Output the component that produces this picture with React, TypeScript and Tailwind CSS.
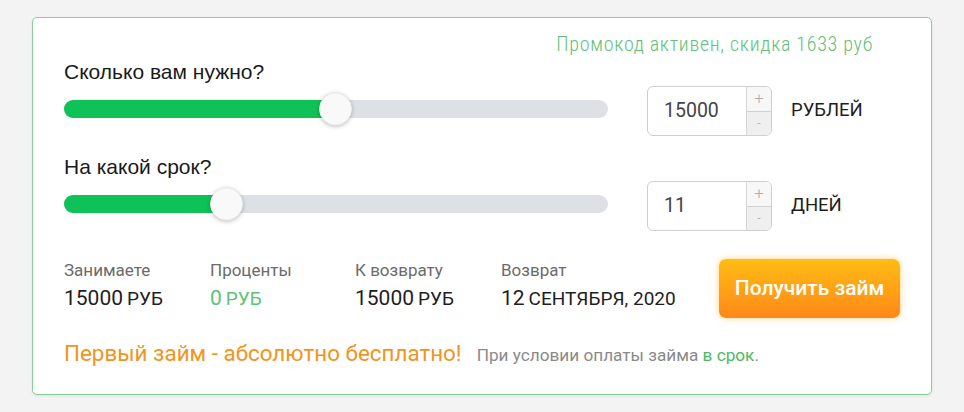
import React from "react";

const Slider = ({ fill }: { fill: number }) => (
  <div className="relative mb-[4px] h-[18px] w-[544px] rounded-full bg-[#dde1e6]">
    <div
      className="h-full rounded-full bg-[#0fc257]"
      style={{ width: fill }}
    />
    <div
      className="absolute top-1/2 h-[33px] w-[33px] -translate-y-1/2 rounded-full border border-[#ececec] bg-[#f9f9f9] shadow-[0_1px_4px_rgba(0,0,0,0.25)]"
      style={{ left: fill - 16 }}
    />
  </div>
);

const Spinner = ({ value }: { value: string }) => (
  <div className="flex h-[50px] w-[125px] overflow-hidden rounded-[6px] border border-[#cfcfcf] bg-white">
    <div className="flex flex-1 items-center pl-[16px] text-[19.5px] text-[#444]">
      {value}
    </div>
    <div className="flex w-[25px] flex-col border-l border-[#d6d6d6]">
      <div className="flex flex-1 items-center justify-center border-b border-[#d0d0d0] bg-[#f7f7f7] text-[17px] font-light leading-none text-[#b0b0b0]">
        +
      </div>
      <div className="flex flex-1 items-center justify-center bg-[#efefef] text-[12px] leading-none text-[#b8b8b8]">
        -
      </div>
    </div>
  </div>
);

const Stat = ({
  label,
  num,
  unit,
  green,
  w,
}: {
  label: string;
  num: string;
  unit: string;
  green?: boolean;
  w: string;
}) => (
  <div className={w}>
    <div className="text-[17px] leading-[20px] text-[#6b6b6b]">{label}</div>
    <div
      className={`mt-[7px] leading-[22px] ${green ? "text-[#5cc275]" : "text-[#1e1e1e]"}`}
    >
      <span className="text-[21px]">{num}</span>{" "}
      <span className="text-[19px]">{unit}</span>
    </div>
  </div>
);

export default function App() {
  return (
    <div
      className="min-h-[412px] w-full bg-[#f3f3f3] pt-[17px] pl-[32px]"
      style={{ fontFamily: "Roboto, 'Liberation Sans', sans-serif" }}
    >
      <div className="h-[378px] w-[900px] rounded-[5px] border border-[#86cf98] bg-white px-[31px] shadow-[0_1px_3px_rgba(0,0,0,0.08)]">
        <div className="flex justify-end pt-[15px] pr-[27px]">
          <span
            className="text-[20px] font-light leading-[22px] tracking-[0.7px] text-[#62c07a]"
            style={{ fontStretch: "condensed", fontFamily: "'Roboto Condensed', 'Liberation Sans Narrow', Roboto, sans-serif" }}
          >
            Промокод активен, скидка 1633 руб
          </span>
        </div>

        <div
          className="mt-[5px] text-[21px] leading-[24px] text-[#1a1a1a]"
          style={{ fontFamily: "'Liberation Sans', Arial, sans-serif" }}
        >
          Сколько вам нужно?
        </div>
        <div className="mt-[2px] flex h-[50px] items-center">
          <Slider fill={271} />
          <div className="ml-[39px]">
            <Spinner value="15000" />
          </div>
          <div className="ml-[19px] text-[18.5px] text-[#1e1e1e]">РУБЛЕЙ</div>
        </div>

        <div
          className="mt-[19px] text-[21px] leading-[24px] text-[#1a1a1a]"
          style={{ fontFamily: "'Liberation Sans', Arial, sans-serif" }}
        >
          На какой срок?
        </div>
        <div className="mt-[2px] flex h-[50px] items-center">
          <Slider fill={162} />
          <div className="ml-[39px]">
            <Spinner value="11" />
          </div>
          <div className="ml-[19px] text-[18.5px] text-[#1e1e1e]">ДНЕЙ</div>
        </div>

        <div className="mt-[28px] flex h-[59px] items-start">
          <div className="flex pt-[1px]">
            <Stat w="w-[146px]" label="Занимаете" num="15000" unit="РУБ" />
            <Stat w="w-[145px]" label="Проценты" num="0" unit="РУБ" green />
            <Stat w="w-[146px]" label="К возврату" num="15000" unit="РУБ" />
            <Stat w="w-[200px]" label="Возврат" num="12" unit="СЕНТЯБРЯ, 2020" />
          </div>
          <button className="ml-auto h-[59px] w-[181px] rounded-[7px] bg-gradient-to-b from-[#ffbc14] to-[#ff8818] text-[21px] font-medium text-white shadow-[0_0_6px_rgba(255,180,40,0.6)]">
            Получить займ
          </button>
        </div>

        <div className="mt-[21px] flex items-baseline">
          <span className="text-[22.4px] leading-[28px] text-[#f39322]">
            Первый займ - абсолютно бесплатно!
          </span>
          <span className="ml-[15px] text-[17.2px] text-[#8a8a8a]">
            При условии оплаты займа{" "}
            <span className="text-[#4dba62]">в срок</span>.
          </span>
        </div>
      </div>
    </div>
  );
}
